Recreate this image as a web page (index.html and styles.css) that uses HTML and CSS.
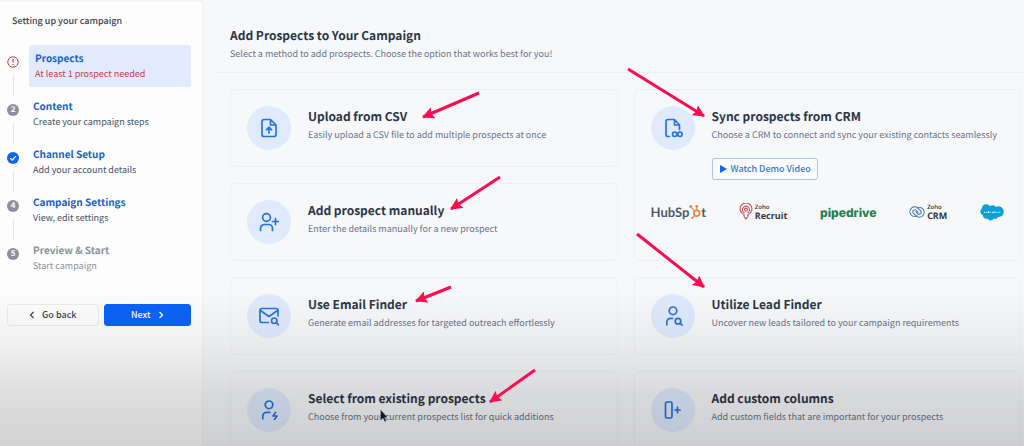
FILE: index.html
```html
<!DOCTYPE html>
<html lang="en">
<head>
<meta charset="utf-8">
<title>Add Prospects to Your Campaign</title>
<meta name="viewport" content="width=device-width, initial-scale=1">
<link rel="stylesheet" href="styles.css">
</head>
<body>
<div class="app">
  <aside class="sidebar">
    <h2 class="sidebar-title">Setting up your campaign</h2>
    <ol class="steps">
      <li class="step step-current">
        <span class="marker"><svg class="marker-icon" viewBox="0 0 12 12" aria-hidden="true"><circle cx="6" cy="6" r="5.2" fill="none" stroke="#c0414b" stroke-width="1"/><path d="M6 3v3.6M6 8v1" stroke="#c0414b" stroke-width="1.2"/></svg></span>
        <a class="step-body" href="#prospects"><span class="step-name">Prospects</span><span class="step-note">At least 1 prospect needed</span></a>
      </li>
      <li class="step">
        <span class="marker"><span class="number">2</span></span>
        <a class="step-body" href="#content"><span class="step-name">Content</span><span class="step-note">Create your campaign steps</span></a>
      </li>
      <li class="step">
        <span class="marker"><svg class="marker-icon" viewBox="0 0 12 12" aria-hidden="true"><circle cx="6" cy="6" r="6" fill="#0f65f5"/><path d="M3.2 6.2 5.2 8.1 8.9 4.2" fill="none" stroke="#fff" stroke-width="1.1"/></svg></span>
        <a class="step-body" href="#channel"><span class="step-name">Channel Setup</span><span class="step-note">Add your account details</span></a>
      </li>
      <li class="step">
        <span class="marker"><span class="number">4</span></span>
        <a class="step-body" href="#settings"><span class="step-name">Campaign Settings</span><span class="step-note">View, edit settings</span></a>
      </li>
      <li class="step step-disabled">
        <span class="marker"><span class="number">5</span></span>
        <a class="step-body" href="#preview"><span class="step-name">Preview &amp; Start</span><span class="step-note">Start campaign</span></a>
      </li>
    </ol>
    <div class="actions">
      <button class="btn btn-back" type="button"><svg class="chevron" viewBox="0 0 6 8" aria-hidden="true"><path d="M4.5 1 1.5 4l3 3"/></svg>Go back</button>
      <button class="btn btn-next" type="button">Next<svg class="chevron" viewBox="0 0 6 8" aria-hidden="true"><path d="M1.5 1l3 3-3 3"/></svg></button>
    </div>
  </aside>

  <main class="main">
    <header class="header">
      <h1 class="title">Add Prospects to Your Campaign</h1>
      <p class="subtitle">Select a method to add prospects. Choose the option that works best for you!</p>
    </header>
    <div class="cards">
      <section class="card">
        <span class="badge"><svg class="icon" viewBox="0 0 20 20" aria-hidden="true"><path d="M11.5 1.5H5A2 2 0 0 0 3 3.500v13a2 2 0 0 0 2 2h10a2 2 0 0 0 2-2V7zM11.500 1.500V7H17M10 15V9.500M7.400 11.800 10 9.200l2.600 2.600"/></svg></span>
        <div class="text"><h3 class="name">Upload from CSV</h3><p class="note">Easily upload a CSV file to add multiple prospects at once</p></div>
      </section>
      <section class="card card-crm">
        <span class="badge"><svg class="icon" viewBox="0 0 20 20" aria-hidden="true"><path d="M6.500 18.500H5a2 2 0 0 1-2-2v-13a2 2 0 0 1 2-2h6.500L16.500 7v4.500M11.500 1.500V7h5"/><circle cx="11.700" cy="16.300" r="2.200"/><circle cx="17" cy="16.300" r="2.200"/></svg></span>
        <div class="text"><h3 class="name">Sync prospects from CRM</h3><p class="note">Choose a CRM to connect and sync your existing contacts seamlessly</p>
          <button class="btn btn-demo" type="button"><svg class="play" viewBox="0 0 8 8" aria-hidden="true"><path d="M1 0v8l7-4z"/></svg>Watch Demo Video</button>
        </div>
        <ul class="logos">
          <li class="logo hubspot"><span>HubSp</span><svg class="sprocket" viewBox="0 0 14 18" aria-hidden="true"><g fill="none" stroke="#f08345"><circle cx="9" cy="10.500" r="3.400" stroke-width="2"/><path d="M9 7V3M6.500 8 2 3M6.600 13l-2.400 2.700" stroke-width="1.300"/></g><g fill="#f08345"><circle cx="9" cy="2.400" r="1.600"/><circle cx="1.900" cy="2.600" r="1.700"/><circle cx="3.900" cy="15.900" r="1.300"/></g></svg><span>t</span></li>
          <li class="logo zoho"><svg class="recruit-mark" viewBox="0 0 14 18" aria-hidden="true"><g fill="none" stroke="#c9505f" stroke-width="1.100"><path d="M5 13.500v-2A5.900 5.900 0 1 1 9 11.500v2"/><path d="M5.500 10A3.600 3.600 0 1 1 8.500 10"/><circle cx="7" cy="6.600" r="1.500"/><path d="M5 13.500 7 16l2-2.500"/></g></svg><span class="zoho-text"><small class="zoho-brand">Zoho</small><b class="zoho-product">Recruit</b></span></li>
          <li class="logo pipedrive">pipedrive</li>
          <li class="logo zoho zoho-crm"><svg class="crm-mark" viewBox="0 0 16 12" aria-hidden="true"><g fill="none" stroke="#4677b5" stroke-width="1.100"><path d="M8.500 9.600A4.800 4.800 0 1 1 9 2.200l2.500 2.400c1.200 1.300.8 3-.6 3.500s-2.300-.4-3-1.200L6.600 5.600"/><path d="M7.500 2.400A4.800 4.800 0 1 1 7 9.800L4.500 7.400c-1.200-1.300-.8-3 .6-3.500s2.300.4 3 1.200l1.300 1.300"/></g></svg><span class="zoho-text"><small class="zoho-brand">Zoho</small><b class="zoho-product">CRM</b></span></li>
          <li class="logo salesforce"><svg class="cloud" viewBox="0 0 24 17" role="img" aria-label="salesforce"><path fill="#0c9ddb" d="M10 2.200A4.600 4.600 0 0 1 16.200 3 5 5 0 0 1 23.600 8c0 3.200-2.600 5.300-5.600 4.900-.9 1.600-2.700 2.300-4.300 1.600-1 2.200-4.700 3-6.200.1C4.800 15.200 2.800 13.300 3 11.200-.3 9.800-.3 5.800 2 4.400 1.700.4 7.500-1.200 10 2.200z"/><path d="M4 8.300h1.500M6.200 8.500h1.500M8.400 7v2M9.500 8.300H11M12 8.500h1.400M14.200 7.300V9M15.400 8.200h1.300M17.400 8.500h.8M18.900 8.200h1.500" stroke="#d5effa" stroke-width="1.100"/></svg></li>
        </ul>
      </section>
      <section class="card">
        <span class="badge"><svg class="icon" viewBox="0 0 20 20" aria-hidden="true"><circle cx="7.500" cy="5.500" r="3.900"/><path d="M1.500 18.500V16.500a4 4 0 0 1 4-4h4a4 4 0 0 1 4 4v2M16.500 6.500v6M13.500 9.500h6"/></svg></span>
        <div class="text"><h3 class="name">Add prospect manually</h3><p class="note">Enter the details manually for a new prospect</p></div>
      </section>
      <section class="card">
        <span class="badge"><svg class="icon" viewBox="0 0 20 20" aria-hidden="true"><path d="M9.500 16.500H3a2 2 0 0 1-2-2v-10a2 2 0 0 1 2-2h14a2 2 0 0 1 2 2V10M1.500 4.500 10 10.500l8.500-6"/><circle cx="15.200" cy="14.700" r="2.700"/><path d="m17.200 16.700 2.300 2.300"/></svg></span>
        <div class="text"><h3 class="name">Use Email Finder</h3><p class="note">Generate email addresses for targeted outreach effortlessly</p></div>
      </section>
      <section class="card">
        <span class="badge"><svg class="icon" viewBox="0 0 20 20" aria-hidden="true"><circle cx="10" cy="4.800" r="3.800"/><path d="M3.800 18.800v-2.500a4 4 0 0 1 4-4h1.700"/><circle cx="15" cy="15.200" r="2.800"/><path d="m17 17.200 2 2"/></svg></span>
        <div class="text"><h3 class="name">Utilize Lead Finder</h3><p class="note">Uncover new leads tailored to your campaign requirements</p></div>
      </section>
      <section class="card">
        <span class="badge"><svg class="icon" viewBox="0 0 20 20" aria-hidden="true"><circle cx="10" cy="4.800" r="3.800"/><path d="M3.800 18.800v-2.500a4 4 0 0 1 4-4h3M16.500 12.500l-2.500 3.500h4l-2.500 3.500"/></svg></span>
        <div class="text"><h3 class="name">Select from existing prospects</h3><p class="note">Choose from your current prospects list for quick additions</p></div>
      </section>
      <section class="card">
        <span class="badge"><svg class="icon" viewBox="0 0 20 20" aria-hidden="true"><rect x="2.500" y="2" width="6.500" height="16" rx="1.500"/><path d="M14.500 7.300v5.400M11.800 10h5.400"/></svg></span>
        <div class="text"><h3 class="name">Add custom columns</h3><p class="note">Add custom fields that are important for your prospects</p></div>
      </section>
    </div>
  </main>

  <div class="shade"></div>
  <svg class="annotations" width="1024" height="446" viewBox="0 0 1024 446" aria-hidden="true">
    <defs><marker id="head" viewBox="0 0 12 12" refX="11" refY="6" markerWidth="12" markerHeight="12" markerUnits="userSpaceOnUse" orient="auto"><path d="M0 0 12 6 0 12 2 6z" fill="#fb0d50"/></marker></defs>
    <g stroke="#fb0d50" stroke-width="3" stroke-linecap="butt">
      <path d="M479 93 423 117" marker-end="url(#head)"/>
      <path d="M500 177 451 209" marker-end="url(#head)"/>
      <path d="M451 287 416 301" marker-end="url(#head)"/>
      <path d="M535 370 490 402" marker-end="url(#head)"/>
      <path d="M628 69 704 116" marker-end="url(#head)"/>
      <path d="M637 234 704 287" marker-end="url(#head)"/>
    </g>
    <path d="M380.500 409.500v11l2.500-2.300 1.700 3.600 1.600-.8-1.700-3.500h3z" fill="#17191c" stroke="#c8cacd" stroke-width=".4"/>
  </svg>
</div>
</body>
</html>
```
FILE: styles.css
```css
* { box-sizing: border-box; }

body {
  margin: 0;
  background: #f7f8fa;
  color: #2b3648;
  font-family: "Noto Sans CJK SC", "Noto Sans", sans-serif;
  font-size: 10px;
  text-rendering: geometricPrecision;
}

h1, h2, h3, p, ol, ul { margin: 0; padding: 0; list-style: none; }
a { color: inherit; text-decoration: none; }
button { font-family: inherit; }

.app {
  position: relative;
  display: flex;
  height: 100vh;
  overflow: hidden;
}

/* Sidebar */
.sidebar {
  flex: 0 0 203px;
  padding: 11px 11px 0 7px;
  border-top: 2px solid #f3f4f5;
  border-right: 1px solid #eff1f2;
  background: #fdfdfd;
}
.sidebar-title {
  padding-left: 5px;
  color: #3a4350;
  font-size: 9px;
  line-height: 16px;
  font-weight: 500;
}
.steps {
  display: flex;
  flex-direction: column;
  gap: 6px;
  margin-top: 16px;
}
.step { display: flex; gap: 10px; }
.marker {
  position: relative;
  display: flex;
  flex: 0 0 12px;
  justify-content: center;
  padding-top: 11px;
}
.step:not(:last-child) .marker::after {
  content: "";
  position: absolute;
  top: 30px;
  left: 6px;
  width: 1px;
  height: 22px;
  background: #e3e5e8;
}
.marker-icon, .number { width: 12px; height: 12px; }
.number {
  border-radius: 50%;
  background: #8b929d;
  color: #fff;
  font-size: 8px;
  line-height: 12px;
  font-weight: 700;
  text-align: center;
}
.step-body {
  display: flex;
  flex: 1;
  flex-direction: column;
  padding: 5px 4px 6px;
  border-radius: 3px;
  color: #465266;
}
.step-name { color: #1660cf; font-size: 10px; line-height: 16px; font-weight: 700; }
.step-note { font-size: 9px; line-height: 15px; }
.step-current .step-body { padding-left: 6px; background: #e2ebfd; color: #bd3f49; }
.step-disabled .step-body, .step-disabled .step-name { color: #8b929d; }

.btn {
  display: flex;
  align-items: center;
  justify-content: center;
  height: 22px;
  padding: 0 8px;
  border: 1px solid #ececec;
  border-radius: 3px;
  font-size: 9px;
  line-height: 14px;
  font-weight: 500;
}
.actions { display: flex; gap: 5px; margin-top: 25px; }
.actions .btn { gap: 7px; }
.btn-back { flex: 18; background: #fdfdfd; color: #3a4350; }
.btn-next { flex: 17; border-color: #0b63f6; background: #0b63f6; color: #fff; }
.chevron { width: 6px; height: 8px; fill: none; stroke: currentColor; stroke-width: 1.2; }

/* Main column */
.main { flex: 1; min-width: 0; }
.header {
  margin-left: 14px;
  padding: 26px 13px 10px;
  border-bottom: 1px solid #eceef1;
}
.title { font-size: 12px; line-height: 20px; font-weight: 700; }
.subtitle, .note { color: #67748a; font-size: 9px; line-height: 16px; }

.cards {
  display: grid;
  grid-template-columns: 1fr 1fr;
  grid-auto-rows: minmax(78px, auto);
  gap: 16px;
  padding: 16px 3px 16px 27px;
}
.card {
  display: grid;
  grid-template-columns: 44px 1fr;
  column-gap: 17px;
  align-content: start;
  padding: 16px;
  border: 1px solid #f0f1f3;
  border-radius: 5px;
}
.card-crm { grid-row: span 2; row-gap: 22px; }
.badge {
  display: flex;
  align-items: center;
  justify-content: center;
  width: 44px;
  height: 44px;
  border-radius: 50%;
  background: #dfebfd;
}
.icon {
  width: 20px;
  height: 20px;
  fill: none;
  stroke: #2c72dc;
  stroke-width: 1.700;
  stroke-linecap: round;
  stroke-linejoin: round;
}
.name { padding-top: 1px; font-size: 12px; line-height: 20px; font-weight: 700; }
.btn-demo {
  gap: 4px;
  margin-top: 15px;
  padding: 0 6px;
  border-color: #a9c6ee;
  background: #fafbfd;
  color: #3b76c8;
}
.play { width: 8px; height: 8px; fill: #0f65f5; }

/* CRM logos */
.logos {
  display: flex;
  grid-column: 1 / -1;
  align-items: center;
  justify-content: space-between;
}
.logo { display: flex; align-items: center; height: 20px; }
.hubspot { color: #4e5a68; font-family: Lato, sans-serif; font-size: 13px; font-weight: 700; }
.sprocket { width: 12px; height: 16px; }
.zoho { gap: 2px; color: #33373d; font-family: "Open Sans", sans-serif; }
.recruit-mark { width: 14px; height: 18px; }
.crm-mark { width: 16px; height: 12px; }
.zoho-text { display: flex; flex-direction: column; }
.zoho-brand { font-size: 6px; line-height: 8px; font-weight: 600; }
.zoho-product { font-size: 9px; line-height: 10px; font-weight: 700; }
.pipedrive { color: #1f8150; font-family: Inter, sans-serif; font-size: 12px; font-weight: 800; }
.cloud { width: 24px; height: 17px; }

/* Overlays */
.shade {
  position: absolute;
  inset: 65% 0 0;
  background: linear-gradient(rgba(0, 0, 0, 0), rgba(0, 0, 0, .06) 38%, rgba(0, 0, 0, .12) 66%, rgba(0, 0, 0, .17));
  pointer-events: none;
}
.annotations { position: absolute; top: 0; left: 0; pointer-events: none; }
```
